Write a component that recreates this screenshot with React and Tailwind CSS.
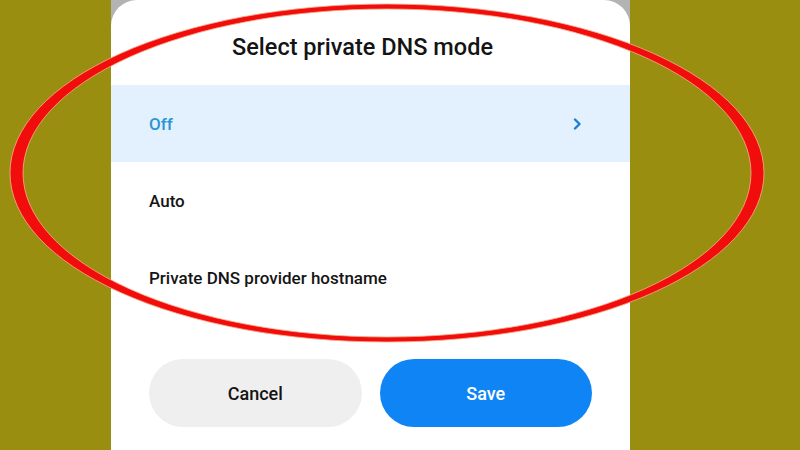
import React from 'react';

const options = [
  { id: 'off', label: 'Off', active: true },
  { id: 'auto', label: 'Auto' },
  { id: 'hostname', label: 'Private DNS provider hostname' },
];

// hand-drawn red ring over the dialog
const Ring = () => (
  <svg className="absolute inset-0 pointer-events-none" width="800" height="450" viewBox="0 0 800 450">
    <path
      fillRule="evenodd"
      fill="#f20d0d"
      stroke="#f6b08a"
      strokeWidth="0.8"
      d="M10 173 A377 169 0 1 0 764 173 A377 169 0 1 0 10 173 Z M23 173 A364 164 0 1 0 751 173 A364 164 0 1 0 23 173 Z"
    />
  </svg>
);

export default function App() {
  return (
    <div
      className="relative w-[800px] h-[450px] overflow-hidden flex bg-[#998e10]"
      style={{ fontFamily: 'Roboto, "Noto Sans", sans-serif' }}
    >
      <div className="w-[111px] shrink-0" />
      <div className="w-[519px] shrink-0 bg-[#b3b3b3]">
        <div className="h-full bg-white rounded-t-[26px] flex flex-col">
          <h1 className="pt-[29px] pb-[20px] pr-[16px] text-center text-[23.5px] font-medium text-[#141414] leading-[36px]">
            Select private DNS mode
          </h1>
          {options.map((opt) => (
            <div
              key={opt.id}
              className={`h-[77px] flex items-center justify-between pl-[38px] pr-[48px] ${
                opt.active ? 'bg-[#e3f0fd]' : ''
              }`}
            >
              <span
                className={`text-[17px] font-medium pt-[2px] ${
                  opt.active ? 'text-[#2a95d6]' : 'text-[#151515]'
                }`}
              >
                {opt.label}
              </span>
              {opt.active && (
                <svg width="10" height="12" viewBox="0 0 10 12">
                  <polyline points="3,1.5 7.5,6 3,10.5" fill="none" stroke="#1f7ed0" strokeWidth="2.4" strokeLinecap="round" strokeLinejoin="round" />
                </svg>
              )}
            </div>
          ))}
          <div className="flex gap-[18px] px-[38px] pt-[43px]">
            <button className="flex-1 h-[68px] rounded-full bg-[#efefef] text-[18px] font-medium text-[#141414]">
              Cancel
            </button>
            <button className="flex-1 h-[68px] rounded-full bg-[#0f85f5] text-[18px] font-medium text-white">
              Save
            </button>
          </div>
        </div>
      </div>
      <div className="flex-1" />
      <Ring />
    </div>
  );
}
